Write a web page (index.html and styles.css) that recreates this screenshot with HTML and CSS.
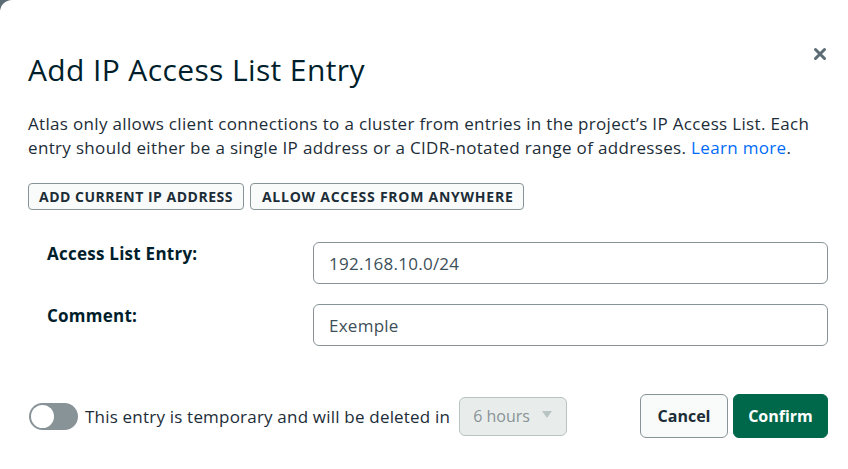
FILE: index.html
```html
<!DOCTYPE html>
<html>
<head>
<meta charset="utf-8">
<link rel="stylesheet" href="styles.css">
</head>
<body>
<div class="modal">
  <button class="close" aria-label="Close">
    <svg width="14" height="14" viewBox="0 0 14 14"><path d="M2.5 2.5 L11.5 11.5 M11.5 2.5 L2.5 11.5" stroke="#5c6c75" stroke-width="3" stroke-linecap="round"/></svg>
  </button>
  <h1 class="title">Add IP Access List Entry</h1>
  <p class="desc">Atlas only allows client connections to a cluster from entries in the project’s IP Access List. Each entry should either be a single IP address or a CIDR-notated range of addresses. <a class="link" href="#">Learn more</a>.</p>
  <div class="quick">
    <button class="qbtn">ADD CURRENT IP ADDRESS</button>
    <button class="qbtn">ALLOW ACCESS FROM ANYWHERE</button>
  </div>
  <div class="form">
    <label class="label">Access List Entry:</label>
    <div class="input">192.168.10.0/24</div>
    <label class="label">Comment:</label>
    <div class="input">Exemple</div>
  </div>
  <div class="footer">
    <div class="temp">
      <span class="toggle"><span class="knob"></span></span>
      <span class="temp-text">This entry is temporary and will be deleted in</span>
      <span class="select">6 hours <span class="caret"></span></span>
    </div>
    <div class="actions">
      <button class="btn cancel">Cancel</button>
      <button class="btn confirm">Confirm</button>
    </div>
  </div>
</div>
</body>
</html>
```
FILE: styles.css
```css
* { box-sizing: border-box; }
html, body { margin: 0; height: 100%; }
body {
  background: #5d6c74;
  font-family: "Open Sans", "Noto Sans", sans-serif;
  color: #1c2d38;
}
.modal {
  position: relative;
  background: #fff;
  height: 469px;
  border-top-left-radius: 12px;
  padding: 54px 20px 0 28px;
}
.close {
  position: absolute;
  top: 47px;
  right: 21px;
  width: 14px;
  height: 14px;
  padding: 0;
  border: 0;
  background: none;
  display: flex;
}
.title {
  margin: 0;
  font-size: 30px;
  line-height: 32px;
  font-weight: 400;
  letter-spacing: 0.38px;
  color: #001e2b;
}
.desc {
  margin: 26px 0 0;
  font-size: 17px;
  line-height: 24px;
  letter-spacing: 0.33px;
  color: #1c2d38;
}
.link { color: #016bf8; text-decoration: none; }
.quick {
  margin-top: 23px;
  display: flex;
  gap: 6px;
}
.qbtn {
  height: 27px;
  padding: 0 10px;
  border: 1px solid #889397;
  border-radius: 4px;
  background: #f9fbfa;
  font-family: inherit;
  font-size: 14px;
  font-weight: 700;
  letter-spacing: 0.5px;
  color: #1c2d38;
}
.qbtn + .qbtn { padding: 0 10px 0 11px; letter-spacing: 0.75px; }
.form {
  margin-top: 32px;
  display: grid;
  grid-template-columns: 285px 1fr;
  row-gap: 20px;
  align-items: start;
}
.label {
  padding-left: 19px;
  padding-top: 1px;
  font-size: 17px;
  font-weight: 700;
  letter-spacing: 0.25px;
  color: #001e2b;
  line-height: 22px;
}
.input {
  height: 42px;
  border: 1px solid #889397;
  border-radius: 6px;
  padding: 0 15px;
  display: flex;
  align-items: center;
  font-size: 17px;
  letter-spacing: 0.25px;
  color: #3d4f58;
}
.footer {
  margin-top: 48px;
  display: flex;
  justify-content: space-between;
  align-items: center;
}
.temp {
  display: flex;
  align-items: center;
  padding-left: 1px;
}
.toggle {
  width: 49px;
  height: 27px;
  border-radius: 14px;
  background: #889397;
  display: flex;
  align-items: center;
  padding-left: 2px;
}
.knob {
  width: 23px;
  height: 23px;
  border-radius: 50%;
  background: #fff;
}
.temp-text {
  margin-left: 7px;
  font-size: 17px;
  letter-spacing: 0.2px;
  color: #1c2d38;
}
.select {
  margin-left: 9px;
  width: 108px;
  height: 39px;
  border: 1px solid #b8c4c2;
  border-radius: 6px;
  background: #e8edeb;
  display: flex;
  align-items: center;
  justify-content: space-between;
  padding: 0 14px 0 13px;
  font-size: 16px;
  color: #889397;
}
.caret {
  width: 0;
  height: 0;
  border-left: 5px solid transparent;
  border-right: 5px solid transparent;
  border-top: 7px solid #b8c4c2;
  margin-top: -4px;
}
.actions {
  display: flex;
  gap: 5px;
}
.btn {
  height: 44px;
  border-radius: 6px;
  font-family: inherit;
  font-size: 16px;
  font-weight: 700;
  padding: 0;
}
.cancel {
  width: 88px;
  border: 1px solid #889397;
  background: #f9fbfa;
  color: #1c2d38;
}
.confirm {
  width: 95px;
  border: 1px solid #00684a;
  background: #00684a;
  color: #fff;
}
```
